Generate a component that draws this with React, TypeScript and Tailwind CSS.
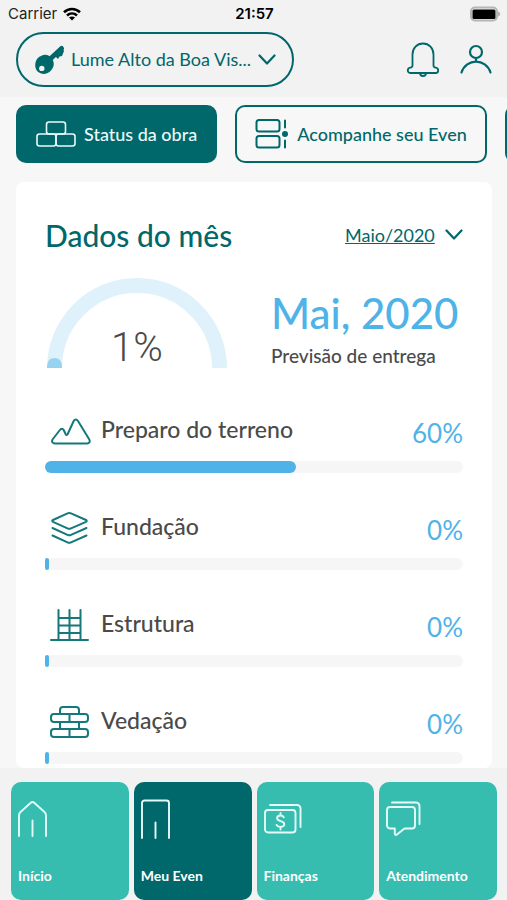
import type { ReactNode } from "react";
import { clsx } from "clsx";

type Stage = { id: string; name: string; progress: number; icon: ReactNode };

const stages: Stage[] = [
  {
    id: "preparo",
    name: "Preparo do terreno",
    progress: 60,
    icon: <path d="M5 32.500h32c2.300 0 3.500-2 2.300-4L28 10c-1.300-2-3.200-2-4.300 0l-6 13c-.6 1.200-1.400 1.200-2 .2L13.700 19c-1-1.700-2.800-1.700-3.800 0L2.500 28.500C1.300 30.500 2.500 32.500 5 32.500Z" />,
  },
  {
    id: "fundacao",
    name: "Fundação",
    progress: 0,
    icon: (
      <>
        <path d="M3 12 17.500 5.300c1.300-.6 2.200-.6 3.500 0L36 12c1 .5 1 1.300 0 1.800l-15 6.500c-1.300.6-2.200.6-3.500 0L3 13.800c-1-.5-1-1.300 0-1.800Z" />
        <path d="m2.500 20 15 6.800c1.300.6 2.200.6 3.500 0L36.500 20M2.500 27.500l15 6.800c1.300.6 2.200.6 3.500 0l15.500-6.800" />
      </>
    ),
  },
  {
    id: "estrutura",
    name: "Estrutura",
    progress: 0,
    icon: <path d="M1 35h37M8.500 35V5M19.500 35V5M30.500 35V5M8.500 13h22M8.500 20.500h22M8.500 28h22" />,
  },
  {
    id: "vedacao",
    name: "Vedação",
    progress: 0,
    icon: (
      <>
        <path d="M10 12V8a3 3 0 0 1 3-3h13a3 3 0 0 1 3 3v4M10 20v7M19.500 12v8M19.500 27v8M29 20v7" />
        <rect x="1" y="12" width="37" height="8" rx="3" />
        <rect x="1" y="27" width="37" height="8" rx="3" />
      </>
    ),
  },
];

const navItems = [
  {
    label: "Início",
    icon: <path d="M1 36V15.500c0-1.500.5-2.500 1.500-3.500l10-9c1.300-1.200 2.700-1.200 4 0l10 9c1 1 1.500 2 1.500 3.500V36M14.500 36V20.500" />,
  },
  {
    label: "Meu Even",
    active: true,
    icon: <path d="M1 38V3a2.500 2.500 0 0 1 2.500-2.500h22A2.500 2.500 0 0 1 28 3v35M14.500 38V22.500" />,
  },
  {
    label: "Finanças",
    icon: (
      <>
        <rect x="1" y="10" width="30.500" height="22.500" rx="3" />
        <path d="M6 5h27a3.500 3.500 0 0 1 3.500 3.500V27" />
        <path d="M19.800 17.200c-.7-1.200-1.800-1.700-3.400-1.700-2 0-3.300 1-3.300 2.700 0 3.700 7.200 2 7.200 5.900 0 1.700-1.500 2.800-3.800 2.800-1.800 0-3.100-.7-3.900-2M16.500 13v2.500M16.500 27v2.500" />
      </>
    ),
  },
  {
    label: "Atendimento",
    icon: (
      <>
        <path d="M4 7h22a3 3 0 0 1 3 3v15.500a3 3 0 0 1-3 3h-7.500L11 34.500c-1.200 1-2.200.5-2.200-.8v-5.200H4a3 3 0 0 1-3-3V10a3 3 0 0 1 3-3Z" />
        <path d="M6 2.500h24A3.500 3.500 0 0 1 33.500 6v18" />
      </>
    ),
  },
];

function ChevronDown({ className }: { className?: string }) {
  return (
    <svg viewBox="0 0 18 12" className={clsx("pointer-events-none h-3 w-[18px]", className)} fill="none" stroke="currentColor" strokeWidth="2.200" strokeLinecap="round" strokeLinejoin="round" aria-hidden="true">
      <path d="m1.500 1.500 7.500 8 7.500-8" />
    </svg>
  );
}

function StatusBar() {
  return (
    <div className="grid h-7 grid-cols-[1fr_auto_1fr] items-center pr-1.5 pl-2 font-['Inter'] text-black">
      <div className="flex items-center gap-1.5 text-[15px] text-[#222]">
        Carrier
        <svg viewBox="0 0 18 14" className="h-3.5 w-[18px]" fill="none" stroke="#000" strokeWidth="2.600" aria-hidden="true">
          <path d="M1 5.200c4.600-4.300 11.400-4.300 16 0M4 8.500c2.900-2.700 7.100-2.700 10 0" />
          <path d="M9 13.500 6 10.600c1.700-1.500 4.300-1.500 6 0Z" fill="#000" stroke="none" />
        </svg>
      </div>
      <div className="text-[15px] font-semibold">21:57</div>
      <svg viewBox="0 0 32 16" className="h-4 w-8 justify-self-end" role="img" aria-label="Bateria">
        <rect x="2" y="1.500" width="26" height="13" rx="4" fill="none" stroke="#b5b5b5" strokeWidth="2" />
        <rect x="3.500" y="3.500" width="23" height="9.500" rx="1.500" fill="#000" />
        <path d="M29 5.500c3 1 3 4 0 5Z" fill="#b5b5b5" />
      </svg>
    </div>
  );
}

function Header() {
  return (
    <header className="bg-[#f2f2f2] pb-2.5 text-[#00676a]">
      <StatusBar />
      <div className="flex items-center justify-between pt-1 pr-[15px] pl-4">
        <div className="relative flex h-[55px] w-[278px] items-center rounded-full border-2 border-[#00676a] pl-4">
          <svg viewBox="0 0 32 32" className="h-8 w-8 shrink-0" aria-hidden="true">
            <path d="M14 17 27.500 4.500" stroke="currentColor" strokeWidth="5" strokeLinecap="round" />
            <path d="m20 11 4 4 1.500-2.500 2.500-.5 2-5-2-4Z" fill="currentColor" />
            <path fillRule="evenodd" fill="currentColor" d="M7 12c4-2.500 8.500-1 11 2.500 2.500 4 2.500 8-1 12-3 3.500-8.500 4.500-12 2C1 26 .500 21 2 17c1-2.500 2.500-4 5-5Zm.8 9.700a2.700 2.700 0 1 0 0 5.400 2.700 2.700 0 0 0 0-5.400Z" />
          </svg>
          <select aria-label="Empreendimento" className="h-full flex-1 appearance-none bg-transparent pl-[5px] text-[18px] outline-none">
            <option>Lume Alto da Boa Vis...</option>
          </select>
          <ChevronDown className="absolute right-4" />
        </div>
        <div className="flex items-center gap-5">
          <button type="button" aria-label="Notificações">
            <svg viewBox="0 0 34 36" className="h-9 w-[34px]" fill="none" stroke="currentColor" strokeWidth="1.800" strokeLinecap="round" strokeLinejoin="round">
              <path d="M6.500 23.500V12.500C6.500 6 11 1.500 17 1.500S27.500 6 27.500 12.500v11c0 1.500.8 2 2.300 2.200 3.200.5 3.200 5.300 0 5.300H4.200c-3.200 0-3.200-4.800 0-5.300 1.500-.2 2.300-.7 2.300-2.200Z" />
              <path d="M14 31c0 4 6 4 6 0" />
            </svg>
          </button>
          <button type="button" aria-label="Perfil">
            <svg viewBox="0 0 32 32" className="h-8 w-8" fill="none" stroke="currentColor" strokeWidth="2.200" strokeLinecap="round">
              <circle cx="16" cy="8" r="6" />
              <path d="M16 14v3.500M1.500 28.500C6 14 26 14 30.500 28.500" />
            </svg>
          </button>
        </div>
      </div>
    </header>
  );
}

function Shortcuts() {
  return (
    <div className="flex shrink-0 gap-[18px] overflow-hidden pl-4 text-[18px] font-medium">
      <button type="button" className="flex h-[58px] shrink-0 items-center gap-2 rounded-[10px] bg-[#00676a] px-5 text-[#eafafa]">
        <svg viewBox="0 0 40 26" className="h-[26px] w-10" fill="none" stroke="currentColor" strokeWidth="1.600" aria-hidden="true">
          <rect x="10.500" y="1" width="19" height="12" rx="2.500" />
          <rect x="1" y="13" width="19" height="12" rx="2.500" />
          <rect x="20" y="13" width="19" height="12" rx="2.500" />
        </svg>
        Status da obra
      </button>
      <button type="button" className="flex h-[58px] shrink-0 items-center gap-2 rounded-[10px] border-2 border-[#00676a] px-[18px] text-[#00676a]">
        <svg viewBox="0 0 34 30" className="h-[30px] w-[34px]" fill="none" stroke="currentColor" strokeWidth="2" strokeLinecap="round" aria-hidden="true">
          <rect x="1.500" y="1" width="23" height="11.500" rx="2.500" />
          <rect x="1.500" y="17" width="23" height="11.500" rx="2.500" />
          <path d="M30 1.500v7M30 21.500v7" />
          <circle cx="30" cy="15" r="3" fill="currentColor" stroke="none" />
        </svg>
        Acompanhe seu Even
      </button>
      <button type="button" aria-label="Mais" className="h-[58px] w-40 shrink-0 rounded-[10px] bg-[#00676a]" />
    </div>
  );
}

function Gauge({ value }: { value: number }) {
  return (
    <div className="relative ml-0.5 w-[180px]">
      <svg viewBox="0 0 180 90" className="block h-[90px] w-[180px]" aria-hidden="true">
        <path d="M7.500 90a82.500 82.500 0 0 1 165 0" fill="none" stroke="#dff1fb" strokeWidth="15" />
        <path d="M0 90c0-6 2-10 7.500-10S15 84 15 90Z" fill="#97d3f1" />
      </svg>
      <span className="absolute inset-x-0 bottom-0 text-center font-['Roboto'] text-[40px] leading-10 font-light text-[#4a4a4a]">{value}%</span>
    </div>
  );
}

function StageRow({ stage }: { stage: Stage }) {
  return (
    <li>
      <div className="flex h-11 items-center">
        <svg viewBox="0 0 40 40" className="ml-[5px] h-10 w-10 shrink-0 text-[#14797a]" overflow="visible" fill="none" stroke="currentColor" strokeWidth="2" strokeLinecap="round" strokeLinejoin="round" aria-hidden="true">
          {stage.icon}
        </svg>
        <span id={stage.id} className="ml-[11px] flex-1 pb-1 text-[23px] leading-7 font-medium text-[#4a4a4a]">{stage.name}</span>
        <span className="pt-1 text-[26px] leading-7 text-[#50b3e7]">{stage.progress}%</span>
      </div>
      <div
        role="progressbar"
        aria-labelledby={stage.id}
        aria-valuenow={stage.progress}
        aria-valuemin={0}
        aria-valuemax={100}
        className="mt-2 h-3 rounded-full bg-[#f6f6f6]"
      >
        <div className="h-full min-w-1 rounded-full bg-[#50b3e7]" style={{ width: `${stage.progress}%` }} />
      </div>
    </li>
  );
}

function MonthCard() {
  return (
    <section className="mt-[19px] mr-[15px] ml-4 rounded-lg bg-white px-[29px] pt-[35px] pb-1">
      <div className="flex h-9 items-center justify-between">
        <h1 className="text-[30px] leading-9 font-medium text-[#00676a]">Dados do mês</h1>
        <div className="relative flex items-center text-[#00676a]">
          <select aria-label="Mês" className="appearance-none bg-transparent pr-7 text-[18px] underline outline-none">
            <option>Maio/2020</option>
          </select>
          <ChevronDown className="absolute right-0" />
        </div>
      </div>
      <div className="mt-[25px] flex items-end justify-between">
        <Gauge value={1} />
        <div className="w-48">
          <p className="text-[42px] leading-[50px] font-medium whitespace-nowrap text-[#50b3e7]">Mai, 2020</p>
          <p className="mt-1.5 text-[19px] leading-6 font-medium whitespace-nowrap text-[#4a4a4a]">Previsão de entrega</p>
        </div>
      </div>
      <ul className="mt-[41px] flex flex-col gap-[33px]">
        {stages.map((stage) => (
          <StageRow key={stage.id} stage={stage} />
        ))}
      </ul>
    </section>
  );
}

function BottomNav() {
  return (
    <nav className="grid shrink-0 grid-cols-4 gap-[5px] bg-[#f2f2f2] pt-3.5 pr-2.5 pl-[11px]">
      {navItems.map((item) => (
        <a
          key={item.label}
          href="#"
          aria-current={item.active ? "page" : undefined}
          className={clsx(
            "flex h-[118px] flex-col justify-between rounded-[10px] px-[7px] pt-[18px] pb-3.5 text-white",
            item.active ? "bg-[#00676a]" : "bg-[#36bdb0]",
          )}
        >
          <svg viewBox="0 0 40 40" className="h-10 w-10" overflow="visible" fill="none" stroke="#e5fbf8" strokeWidth="1.900" strokeLinecap="round" strokeLinejoin="round" aria-hidden="true">
            {item.icon}
          </svg>
          <span className="text-[14px] leading-5 font-bold">{item.label}</span>
        </a>
      ))}
    </nav>
  );
}

export default function App() {
  return (
    <div className="flex h-screen flex-col bg-[#f7f7f7] font-['Lato','Liberation_Sans',sans-serif]">
      <Header />
      <main className="flex min-h-0 flex-1 flex-col overflow-hidden pt-2">
        <Shortcuts />
        <MonthCard />
      </main>
      <BottomNav />
    </div>
  );
}
